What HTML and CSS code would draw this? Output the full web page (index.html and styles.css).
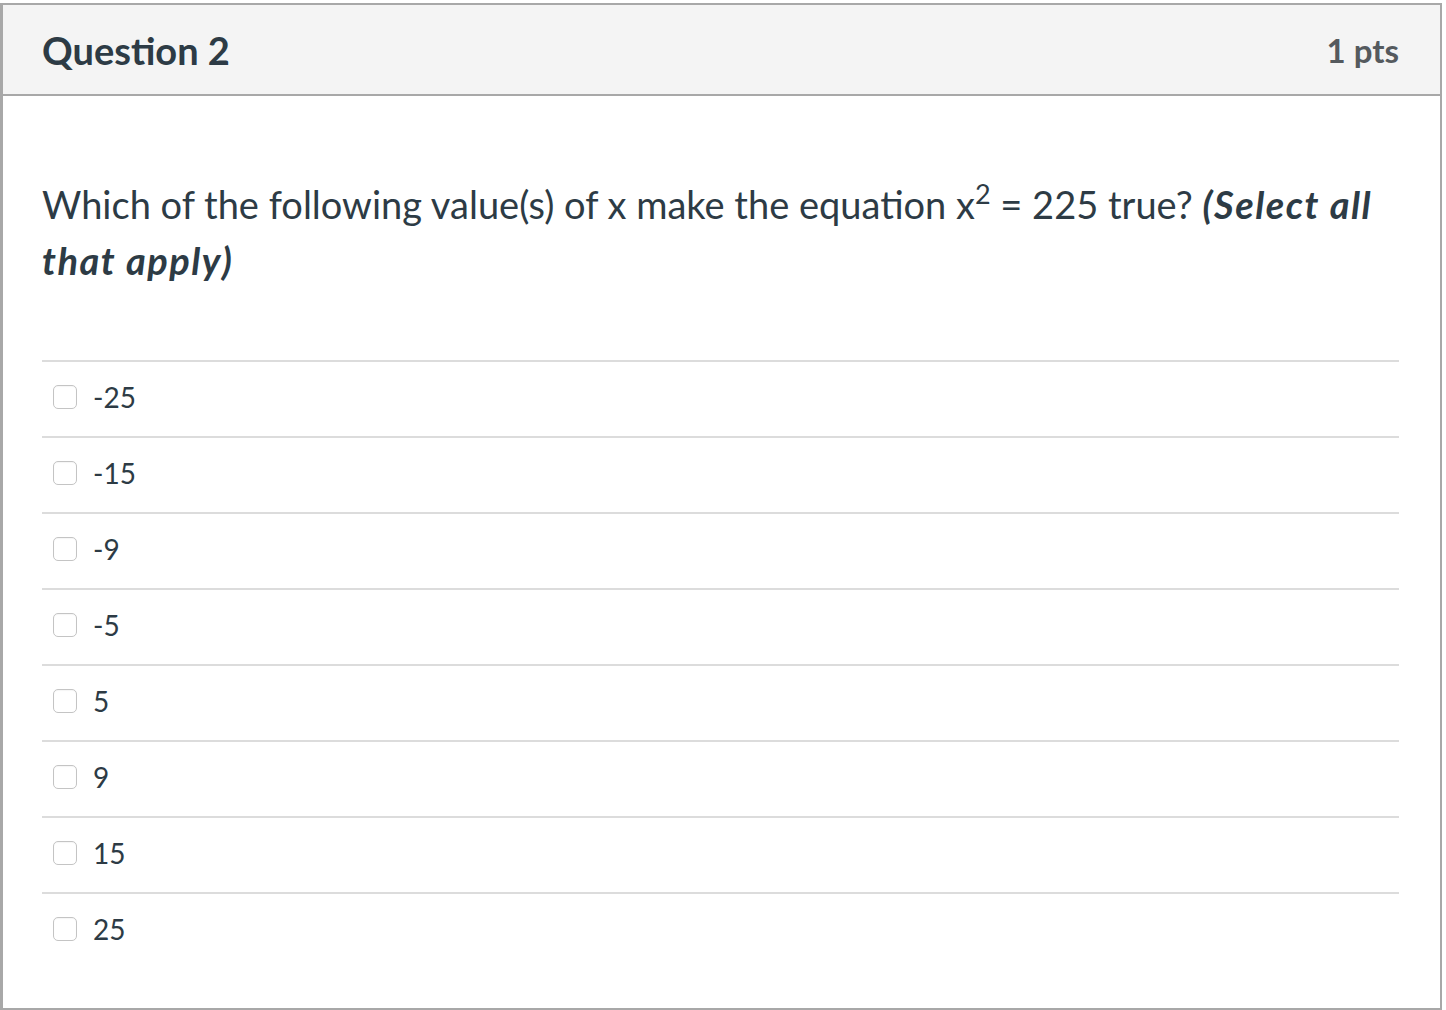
FILE: index.html
```html
<!DOCTYPE html>
<html lang="en">
<head>
<meta charset="utf-8">
<title>Question 2</title>
<link rel="stylesheet" href="styles.css">
</head>
<body>
<div class="quiz">
  <div class="quiz-header">
    <h2 class="quiz-title">Question 2</h2>
    <span class="quiz-points">1 pts</span>
  </div>
  <div class="quiz-body">
    <p class="quiz-text">Which of the following value(s) of x make the equation x<sup>2</sup> = 225 true? <strong><em>(Select all that apply)</em></strong></p>
    <div class="answers">
      <label class="answer"><span class="box"></span><span class="label">-25</span></label>
      <label class="answer"><span class="box"></span><span class="label">-15</span></label>
      <label class="answer"><span class="box"></span><span class="label">-9</span></label>
      <label class="answer"><span class="box"></span><span class="label">-5</span></label>
      <label class="answer"><span class="box"></span><span class="label">5</span></label>
      <label class="answer"><span class="box"></span><span class="label">9</span></label>
      <label class="answer"><span class="box"></span><span class="label">15</span></label>
      <label class="answer"><span class="box"></span><span class="label">25</span></label>
    </div>
  </div>
</div>
</body>
</html>
```

FILE: styles.css
```css
html, body {
  margin: 0;
  padding: 0;
  background: #ffffff;
}
body {
  font-family: Lato, "Noto Sans", sans-serif;
  color: #2d3b45;
}
.quiz {
  box-sizing: border-box;
  width: 1442px;
  margin: 3px 0 0 0;
  border: 2px solid #a8a8a8;
  border-left-width: 3px;
  height: 1007px;
}
.quiz-header {
  box-sizing: border-box;
  height: 91px;
  background: #f4f4f4;
  border-bottom: 2px solid #a8a8a8;
  display: flex;
  align-items: center;
  justify-content: space-between;
  padding: 0 41px 0 39px;
}
.quiz-title {
  margin: 0;
  font-size: 38px;
  font-weight: 700;
  color: #2d3b45;
}
.quiz-points {
  font-size: 33px;
  font-weight: 700;
  color: #555a5e;
}
.quiz-body {
  padding: 80px 41px 0 39px;
}
.quiz-text {
  margin: 0;
  font-size: 38px;
  line-height: 56px;
}
.quiz-text sup {
  font-size: 27px;
  line-height: 0;
  vertical-align: 15px;
}
.quiz-text strong {
  font-weight: 700;
  letter-spacing: 1.5px;
}
.answers {
  margin-top: 72px;
  display: flex;
  flex-direction: column;
}
.answer {
  box-sizing: border-box;
  height: 76px;
  border-top: 2px solid #dcdcdc;
  display: flex;
  align-items: center;
  padding-left: 11px;
  padding-bottom: 5px;
  gap: 16px;
}
.box {
  box-sizing: border-box;
  width: 24px;
  height: 24px;
  border: 1px solid #c4c4c4;
  border-radius: 5px;
  background: #ffffff;
  box-shadow: inset 0 1px 1px rgba(0, 0, 0, 0.04);
}
.label {
  font-size: 28px;
  color: #2d3b45;
}
```
